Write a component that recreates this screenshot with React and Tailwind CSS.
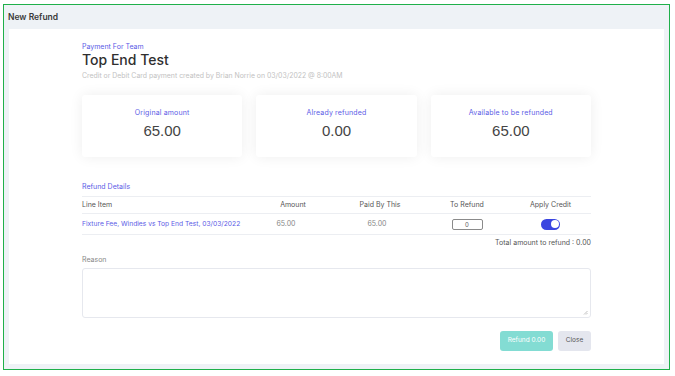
import React from 'react';

const font = "font-['Inter','Liberation_Sans',sans-serif]";

export default function App() {
    const cards = [
        { label: 'Original amount', value: '65.00' },
        { label: 'Already refunded', value: '0.00' },
        { label: 'Available to be refunded', value: '65.00' },
    ];

    return (
        <div className={`w-[675px] h-[376px] bg-white pt-[4px] pl-[3px] ${font}`}>
            <div className="w-[667px] h-[366px] border border-[#1fb04a] bg-[#eef2f6] flex flex-col">
                <div className="h-[24px] flex items-center px-[4px] text-[8.5px] font-semibold text-[#3a3a3a]">
                    New Refund
                </div>

                <div className="flex-1 mx-[5px] bg-white">
                    <div className="w-[509px] mx-auto pt-[13px]">
                        <p className="text-[7px] leading-[10px] text-[#5b5be6]">Payment For Team</p>
                        <h1 className="text-[14px] leading-[16px] font-medium text-[#2f2f2f]">Top End Test</h1>
                        <p className="mt-[3px] text-[6.9px] leading-[10px] text-[#c2c2c2]">
                            Credit or Debit Card payment created by Brian Norrie on 03/03/2022 @ 8:00AM
                        </p>

                        <div className="mt-[14px] grid grid-cols-3 gap-[14px]">
                            {cards.map((c) => (
                                <div key={c.label} className="h-[62px] bg-white rounded-[3px] shadow-[0_0_14px_rgba(0,0,0,0.07)] pt-[13px] flex flex-col items-center">
                                    <p className="text-[7px] tracking-[0.15px] leading-[10px] text-[#5b5be6]">{c.label}</p>
                                    <p className="mt-[3px] text-[15px] leading-[20px] text-[#444] font-['Liberation_Sans',sans-serif]">{c.value}</p>
                                </div>
                            ))}
                        </div>

                        <p className="mt-[25px] text-[7px] leading-[10px] text-[#5b5be6]">Refund Details</p>

                        <div className="mt-[4px] grid grid-cols-[168px_86px_88px_86px_81px] h-[18px] items-center border-t border-b border-[#eceef2] text-[7px] text-[#555]">
                            <span>Line Item</span>
                            <span className="text-center">Amount</span>
                            <span className="text-center">Paid By This</span>
                            <span className="text-center">To Refund</span>
                            <span className="text-center">Apply Credit</span>
                        </div>
                        <div className="grid grid-cols-[168px_86px_88px_86px_81px] h-[21px] items-center border-b border-[#eceef2] text-[7px]">
                            <span className="text-[6.7px] text-[#5b5be6] whitespace-nowrap">Fixture Fee, Windies vs Top End Test, 03/03/2022</span>
                            <span className="text-center pr-[14px] text-[#888]">65.00</span>
                            <span className="text-center pr-[6px] text-[#888]">65.00</span>
                            <div className="flex justify-center">
                                <div className="w-[31px] h-[11px] border border-[#8a8a8a] rounded-[2px] flex items-center justify-center text-[6px] text-[#555]">0</div>
                            </div>
                            <div className="flex justify-center">
                                <div className="w-[19px] h-[11px] rounded-full bg-[#3a45e0] flex items-center justify-end pr-[1.5px]">
                                    <div className="w-[8px] h-[8px] rounded-full bg-white" />
                                </div>
                            </div>
                        </div>

                        <p className="mt-[3px] text-right text-[7px] leading-[10px] text-[#555]">Total amount to refund : 0.00</p>

                        <p className="mt-[7px] text-[7px] leading-[10px] text-[#888]">Reason</p>
                        <div className="mt-[3px] h-[50px] border border-[#e6e8ee] rounded-[3px] relative">
                            <svg className="absolute right-[2px] bottom-[2px]" width="5" height="5" viewBox="0 0 5 5">
                                <path d="M1 4.5 L4.5 1 M3 4.5 L4.5 3" stroke="#999" strokeWidth="0.6" />
                            </svg>
                        </div>

                        <div className="mt-[13px] flex justify-end gap-[5px]">
                            <button className="w-[53px] h-[20px] rounded-[3px] bg-[#83dcd3] text-white text-[6.5px]">Refund 0.00</button>
                            <button className="w-[33px] h-[20px] rounded-[3px] bg-[#e4e6ee] text-[#555] text-[6.5px]">Close</button>
                        </div>
                    </div>
                </div>

                <div className="h-[5px]" />
            </div>
        </div>
    );
}
